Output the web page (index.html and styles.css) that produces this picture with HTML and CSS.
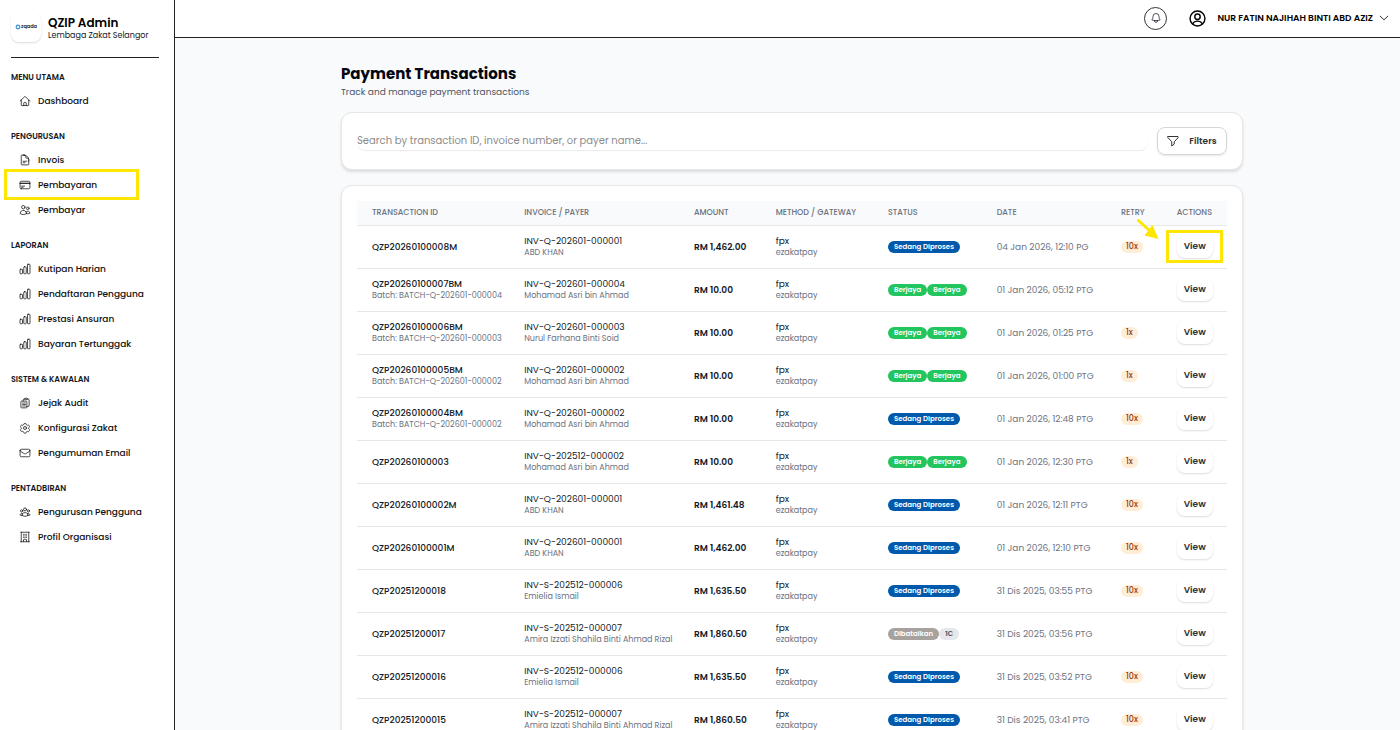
FILE: index.html
```html
<!DOCTYPE html>
<html lang="ms">
<head>
    <meta charset="UTF-8">
    <meta name="viewport" content="width=device-width, initial-scale=1.0">
    <title>QZIP Admin - Payment Transactions</title>
    <link rel="stylesheet" href="styles.css">
</head>
<body>
    <!-- Icon set -->
    <svg class="sprite" aria-hidden="true">
        <symbol id="i-home" viewBox="0 0 24 24"><path d="M2.5 12 11 3.500a1.400 1.400 0 0 1 2 0L21.500 12M4.500 10v10c0 .700.500 1.200 1.200 1.200h12.600c.700 0 1.200-.500 1.200-1.200V10M9.500 21v-5c0-.600.500-1.100 1.100-1.100h2.800c.600 0 1.100.500 1.100 1.100v5"/></symbol>
        <symbol id="i-doc" viewBox="0 0 24 24"><path d="M19.500 14.200v-2.600a3.400 3.400 0 0 0-3.400-3.400h-1.500a1.100 1.100 0 0 1-1.100-1.100V5.600a3.400 3.400 0 0 0-3.400-3.400H8.200M10.500 2.200H5.600c-.600 0-1.100.500-1.100 1.200v17.200c0 .700.500 1.200 1.100 1.200h12.800c.600 0 1.100-.500 1.100-1.200v-9.300a9 9 0 0 0-9-9zM8.200 14.500h7.500M8.200 17.500H12"/></symbol>
        <symbol id="i-card" viewBox="0 0 24 24"><path d="M2.200 8.200h19.600M2.200 9h19.600M5.200 14.200h6M5.200 16.500h3M4.500 19.500h15a2.300 2.300 0 0 0 2.300-2.200V6.800a2.300 2.300 0 0 0-2.300-2.300h-15a2.300 2.300 0 0 0-2.300 2.300v10.500a2.300 2.300 0 0 0 2.300 2.200z"/></symbol>
        <symbol id="i-users" viewBox="0 0 24 24"><path d="M15 19.100a9.400 9.400 0 0 0 2.600.400 9.300 9.300 0 0 0 4.100-1 4.100 4.100 0 0 0-7.500-2.400M15 19.100c0-1.100-.300-2.100-.800-3M15 19.100v.100A12.300 12.300 0 0 1 8.600 21a12.300 12.300 0 0 1-6.400-1.800v-.100a6.400 6.400 0 0 1 12-3M12 6.400a3.400 3.400 0 1 1-6.800 0 3.400 3.400 0 0 1 6.800 0zM20.200 8.600a2.600 2.600 0 1 1-5.200 0 2.600 2.600 0 0 1 5.200 0z"/></symbol>
        <symbol id="i-chart" viewBox="0 0 24 24"><rect x="2" y="12.500" width="5" height="9" rx="1.200"/><rect x="9.500" y="7.500" width="5" height="14" rx="1.200"/><rect x="17" y="2.500" width="5" height="19" rx="1.200"/></symbol>
        <symbol id="i-clipboard" viewBox="0 0 24 24"><path d="M9 12h3.800M9 15h3.800M9 18h3.800M15.800 18.800H18a2.300 2.300 0 0 0 2.300-2.300V6.100c0-1.100-.900-2.100-2-2.200l-1.100-.100M11.400 3.800a2.300 2.300 0 0 1 2.100-1.500H15c1 0 1.800.600 2.100 1.500M11.400 3.800c-.400.600.100 1.500.800 1.500h4c.500 0 .900-.700.900-1.500M11.400 3.800l-1.100.100a2.200 2.200 0 0 0-2 2.200v2.100M8.200 8.200H4.900c-.600 0-1.100.500-1.100 1.200v11.200c0 .600.500 1.100 1.100 1.100h9.700c.700 0 1.200-.500 1.200-1.100V9.400c0-.700-.500-1.200-1.200-1.200zM6.800 12h.1M6.800 15h.1M6.800 18h.1"/></symbol>
        <symbol id="i-cog" viewBox="0 0 24 24"><path d="M9.600 3.900c.100-.500.600-.900 1.100-.900h2.600c.500 0 1 .400 1.100.900l.200 1.300c.100.400.300.700.700.900l.800.500c.3.200.7.200 1 .1l1.200-.500a1.100 1.100 0 0 1 1.400.5l1.300 2.300c.3.500.2 1-.3 1.400l-1 .800c-.300.300-.400.600-.400 1v1c0 .400.100.700.400 1l1 .8c.4.300.5.900.3 1.400l-1.300 2.200a1.100 1.100 0 0 1-1.400.5l-1.200-.4c-.4-.100-.700-.100-1.100.1l-.700.400c-.4.200-.6.500-.7.900l-.2 1.300c-.1.500-.5.900-1.100.9h-2.600c-.5 0-1-.4-1.100-.9l-.2-1.300c-.1-.4-.3-.7-.7-.9l-.7-.5c-.4-.2-.7-.2-1.100-.1l-1.200.5a1.100 1.100 0 0 1-1.400-.5l-1.300-2.300c-.3-.4-.2-1 .3-1.400l1-.800c.3-.2.400-.6.400-1v-1c0-.4-.1-.7-.4-1l-1-.8c-.4-.3-.5-.9-.3-1.400l1.300-2.200a1.100 1.100 0 0 1 1.400-.5l1.200.4c.4.1.7.1 1.100-.1l.7-.4c.4-.2.6-.5.700-.9z"/><circle cx="12" cy="12" r="3"/></symbol>
        <symbol id="i-mail" viewBox="0 0 24 24"><path d="M21.800 6.800v10.500a2.300 2.300 0 0 1-2.300 2.200h-15a2.300 2.300 0 0 1-2.300-2.200V6.800M21.800 6.800a2.300 2.300 0 0 0-2.300-2.300h-15a2.300 2.300 0 0 0-2.300 2.300M21.800 7c0 .800-.400 1.500-1.100 1.900l-7.500 4.600a2.300 2.300 0 0 1-2.400 0L3.300 8.900A2.300 2.300 0 0 1 2.200 7"/></symbol>
        <symbol id="i-group" viewBox="0 0 24 24"><path d="M18 18.700a9 9 0 0 0 3.700-.5 3 3 0 0 0-4.700-2.700M18 18.700v.3a11.900 11.900 0 0 1-12 0v-.3M18 18.700c0-1.200-.3-2.300-.9-3.200M7 15.500a3 3 0 0 0-4.700 2.700 9 9 0 0 0 3.700.500M7 15.500a6 6 0 0 1 10.100 0M7 15.500a6 6 0 0 0-1 3.200M15 6.800a3 3 0 1 1-6 0 3 3 0 0 1 6 0zM21 9.800a2.200 2.200 0 1 1-4.500 0 2.200 2.200 0 0 1 4.500 0zM7.500 9.800a2.200 2.200 0 1 1-4.500 0 2.200 2.200 0 0 1 4.500 0z"/></symbol>
        <symbol id="i-building" viewBox="0 0 24 24"><path d="M3 21.500h18M3.800 2.500h16.500M4.500 2.500v19M19.500 2.500v19M9 6.800h1.500M9 9.800h1.500M9 12.800h1.500M13.500 6.800H15M13.500 9.800H15M13.500 12.800H15M9 21v-3.400c0-.6.500-1.100 1.100-1.100h3.800c.6 0 1.100.5 1.100 1.100V21"/></symbol>
        <symbol id="i-bell" viewBox="0 0 24 24"><path d="M14.900 17.100a23.800 23.800 0 0 0 5.400-1.300A9 9 0 0 1 18 9.800V9A6 6 0 0 0 6 9v.8a9 9 0 0 1-2.300 6 23.800 23.800 0 0 0 5.400 1.300M14.900 17.100a24.300 24.300 0 0 1-5.800 0M14.900 17.100a3 3 0 1 1-5.800 0"/></symbol>
        <symbol id="i-user" viewBox="0 0 24 24"><circle cx="12" cy="12" r="10.500"/><circle cx="12" cy="9.500" r="3.800"/><path d="M5 19.500c1.500-2.400 4-3.800 7-3.800s5.500 1.400 7 3.800"/></symbol>
        <symbol id="i-funnel" viewBox="0 0 24 24"><path d="M2 3h20v2.500L14.500 13.500v4.700L9.500 22v-8.500L2 5.500z"/></symbol>
        <symbol id="i-down" viewBox="0 0 24 24"><path d="m3 7.500 9 9 9-9"/></symbol>
    </svg>

    <div class="layout">
        <aside class="sidebar">
            <div class="brand">
                <div class="logo">
                    <svg viewBox="0 0 8 8" aria-hidden="true"><circle cx="4" cy="4" r="2.500" fill="#dff0fb" stroke="#3b8fd0" stroke-width="1.500"/></svg>
                    <span>zqada</span>
                </div>
                <div class="brand-text">
                    <div class="brand-name">QZIP Admin</div>
                    <div class="brand-org">Lembaga Zakat Selangor</div>
                </div>
            </div>
            <nav class="menu">
                <h2>MENU UTAMA</h2>
                <a href="#"><svg><use href="#i-home"/></svg>Dashboard</a>
                <h2>PENGURUSAN</h2>
                <a href="#"><svg><use href="#i-doc"/></svg>Invois</a>
                <a href="#" class="marked"><svg><use href="#i-card"/></svg>Pembayaran</a>
                <a href="#"><svg><use href="#i-users"/></svg>Pembayar</a>
                <h2>LAPORAN</h2>
                <a href="#"><svg><use href="#i-chart"/></svg>Kutipan Harian</a>
                <a href="#"><svg><use href="#i-chart"/></svg>Pendaftaran Pengguna</a>
                <a href="#"><svg><use href="#i-chart"/></svg>Prestasi Ansuran</a>
                <a href="#"><svg><use href="#i-chart"/></svg>Bayaran Tertunggak</a>
                <h2>SISTEM &amp; KAWALAN</h2>
                <a href="#"><svg><use href="#i-clipboard"/></svg>Jejak Audit</a>
                <a href="#"><svg><use href="#i-cog"/></svg>Konfigurasi Zakat</a>
                <a href="#"><svg><use href="#i-mail"/></svg>Pengumuman Email</a>
                <h2>PENTADBIRAN</h2>
                <a href="#"><svg><use href="#i-group"/></svg>Pengurusan Pengguna</a>
                <a href="#"><svg><use href="#i-building"/></svg>Profil Organisasi</a>
            </nav>
        </aside>

        <div class="page">
            <header class="topbar">
                <button class="bell" aria-label="Notifikasi"><svg><use href="#i-bell"/></svg></button>
                <button class="account">
                    <svg class="avatar"><use href="#i-user"/></svg>
                    NUR FATIN NAJIHAH BINTI ABD AZIZ
                    <svg class="caret"><use href="#i-down"/></svg>
                </button>
            </header>

            <main class="content">
                <div class="container">
                    <h1>Payment Transactions</h1>
                    <p class="subtitle">Track and manage payment transactions</p>

                    <form class="card search">
                        <input type="text" aria-label="Search" placeholder="Search by transaction ID, invoice number, or payer name...">
                        <button type="button" class="filters"><svg><use href="#i-funnel"/></svg>Filters</button>
                    </form>

                    <div class="card">
                        <table>
                            <colgroup>
                                <col class="c-id"><col class="c-invoice"><col class="c-amount"><col class="c-method">
                                <col class="c-status"><col class="c-date"><col class="c-retry"><col class="c-actions">
                            </colgroup>
                            <thead>
                                <tr>
                                    <th>TRANSACTION ID</th>
                                    <th>INVOICE / PAYER</th>
                                    <th>AMOUNT</th>
                                    <th>METHOD / GATEWAY</th>
                                    <th>STATUS</th>
                                    <th>DATE</th>
                                    <th>RETRY</th>
                                    <th>ACTIONS</th>
                                </tr>
                            </thead>
                            <tbody>
                                <tr>
                                    <td class="id">QZP20260100008M</td>
                                    <td>INV-Q-202601-000001<small>ABD KHAN</small></td>
                                    <td class="amount">RM 1,462.00</td>
                                    <td>fpx<small>ezakatpay</small></td>
                                    <td><span class="badge blue">Sedang Diproses</span></td>
                                    <td class="date">04 Jan 2026, 12:10 PG</td>
                                    <td><span class="badge orange">10x</span></td>
                                    <td>
                                        <div class="marked">
                                            <svg class="arrow" viewBox="0 0 22 21"><path d="M1.500 1.500 13 12" fill="none" stroke="#ffe600" stroke-width="3"/><path d="M21.500 20 7.500 16.500 15.500 6z" fill="#ffe600" stroke="none"/></svg>
                                            <button class="view">View</button>
                                        </div>
                                    </td>
                                </tr>
                                <tr>
                                    <td class="id">QZP20260100007BM<small>Batch: BATCH-Q-202601-000004</small></td>
                                    <td>INV-Q-202601-000004<small>Mohamad Asri bin Ahmad</small></td>
                                    <td class="amount">RM 10.00</td>
                                    <td>fpx<small>ezakatpay</small></td>
                                    <td><span class="badge green">Berjaya</span><span class="badge green">Berjaya</span></td>
                                    <td class="date">01 Jan 2026, 05:12 PTG</td>
                                    <td></td>
                                    <td><button class="view">View</button></td>
                                </tr>
                                <tr>
                                    <td class="id">QZP20260100006BM<small>Batch: BATCH-Q-202601-000003</small></td>
                                    <td>INV-Q-202601-000003<small>Nurul Farhana Binti Soid</small></td>
                                    <td class="amount">RM 10.00</td>
                                    <td>fpx<small>ezakatpay</small></td>
                                    <td><span class="badge green">Berjaya</span><span class="badge green">Berjaya</span></td>
                                    <td class="date">01 Jan 2026, 01:25 PTG</td>
                                    <td><span class="badge orange">1x</span></td>
                                    <td><button class="view">View</button></td>
                                </tr>
                                <tr>
                                    <td class="id">QZP20260100005BM<small>Batch: BATCH-Q-202601-000002</small></td>
                                    <td>INV-Q-202601-000002<small>Mohamad Asri bin Ahmad</small></td>
                                    <td class="amount">RM 10.00</td>
                                    <td>fpx<small>ezakatpay</small></td>
                                    <td><span class="badge green">Berjaya</span><span class="badge green">Berjaya</span></td>
                                    <td class="date">01 Jan 2026, 01:00 PTG</td>
                                    <td><span class="badge orange">1x</span></td>
                                    <td><button class="view">View</button></td>
                                </tr>
                                <tr>
                                    <td class="id">QZP20260100004BM<small>Batch: BATCH-Q-202601-000002</small></td>
                                    <td>INV-Q-202601-000002<small>Mohamad Asri bin Ahmad</small></td>
                                    <td class="amount">RM 10.00</td>
                                    <td>fpx<small>ezakatpay</small></td>
                                    <td><span class="badge blue">Sedang Diproses</span></td>
                                    <td class="date">01 Jan 2026, 12:48 PTG</td>
                                    <td><span class="badge orange">10x</span></td>
                                    <td><button class="view">View</button></td>
                                </tr>
                                <tr>
                                    <td class="id">QZP20260100003</td>
                                    <td>INV-Q-202512-000002<small>Mohamad Asri bin Ahmad</small></td>
                                    <td class="amount">RM 10.00</td>
                                    <td>fpx<small>ezakatpay</small></td>
                                    <td><span class="badge green">Berjaya</span><span class="badge green">Berjaya</span></td>
                                    <td class="date">01 Jan 2026, 12:30 PTG</td>
                                    <td><span class="badge orange">1x</span></td>
                                    <td><button class="view">View</button></td>
                                </tr>
                                <tr>
                                    <td class="id">QZP20260100002M</td>
                                    <td>INV-Q-202601-000001<small>ABD KHAN</small></td>
                                    <td class="amount">RM 1,461.48</td>
                                    <td>fpx<small>ezakatpay</small></td>
                                    <td><span class="badge blue">Sedang Diproses</span></td>
                                    <td class="date">01 Jan 2026, 12:11 PTG</td>
                                    <td><span class="badge orange">10x</span></td>
                                    <td><button class="view">View</button></td>
                                </tr>
                                <tr>
                                    <td class="id">QZP20260100001M</td>
                                    <td>INV-Q-202601-000001<small>ABD KHAN</small></td>
                                    <td class="amount">RM 1,462.00</td>
                                    <td>fpx<small>ezakatpay</small></td>
                                    <td><span class="badge blue">Sedang Diproses</span></td>
                                    <td class="date">01 Jan 2026, 12:10 PTG</td>
                                    <td><span class="badge orange">10x</span></td>
                                    <td><button class="view">View</button></td>
                                </tr>
                                <tr>
                                    <td class="id">QZP20251200018</td>
                                    <td>INV-S-202512-000006<small>Emielia Ismail</small></td>
                                    <td class="amount">RM 1,635.50</td>
                                    <td>fpx<small>ezakatpay</small></td>
                                    <td><span class="badge blue">Sedang Diproses</span></td>
                                    <td class="date">31 Dis 2025, 03:55 PTG</td>
                                    <td><span class="badge orange">10x</span></td>
                                    <td><button class="view">View</button></td>
                                </tr>
                                <tr>
                                    <td class="id">QZP20251200017</td>
                                    <td>INV-S-202512-000007<small>Amira Izzati Shahila Binti Ahmad Rizal</small></td>
                                    <td class="amount">RM 1,860.50</td>
                                    <td>fpx<small>ezakatpay</small></td>
                                    <td><span class="badge taupe">Dibatalkan</span><span class="badge grey">1C</span></td>
                                    <td class="date">31 Dis 2025, 03:56 PTG</td>
                                    <td></td>
                                    <td><button class="view">View</button></td>
                                </tr>
                                <tr>
                                    <td class="id">QZP20251200016</td>
                                    <td>INV-S-202512-000006<small>Emielia Ismail</small></td>
                                    <td class="amount">RM 1,635.50</td>
                                    <td>fpx<small>ezakatpay</small></td>
                                    <td><span class="badge blue">Sedang Diproses</span></td>
                                    <td class="date">31 Dis 2025, 03:52 PTG</td>
                                    <td><span class="badge orange">10x</span></td>
                                    <td><button class="view">View</button></td>
                                </tr>
                                <tr>
                                    <td class="id">QZP20251200015</td>
                                    <td>INV-S-202512-000007<small>Amira Izzati Shahila Binti Ahmad Rizal</small></td>
                                    <td class="amount">RM 1,860.50</td>
                                    <td>fpx<small>ezakatpay</small></td>
                                    <td><span class="badge blue">Sedang Diproses</span></td>
                                    <td class="date">31 Dis 2025, 03:41 PTG</td>
                                    <td><span class="badge orange">10x</span></td>
                                    <td><button class="view">View</button></td>
                                </tr>
                            </tbody>
                        </table>
                    </div>
                </div>
            </main>
        </div>
    </div>
</body>
</html>
```

FILE: styles.css
```css
* {
    box-sizing: border-box;
}

body, h1, h2, p {
    margin: 0;
}

body {
    font-family: 'Poppins', 'Inter', 'Open Sans', sans-serif;
    font-size: 9px;
    line-height: 12px;
    color: #111827;
    background-color: #ffffff;
}

button, input {
    font-family: inherit;
    color: inherit;
}

button {
    padding: 0;
    border: none;
    background: none;
    cursor: pointer;
}

svg {
    fill: none;
    stroke: currentColor;
    stroke-width: 1.5;
    stroke-linecap: round;
    stroke-linejoin: round;
    flex-shrink: 0;
}

.sprite {
    display: none;
}

.layout {
    display: flex;
    height: 100vh;
}

/* Sidebar */
.sidebar {
    width: 175px;
    flex-shrink: 0;
    padding: 12px 15px 0 11px;
    border-right: 1px solid #222222;
}

.brand {
    display: flex;
    align-items: center;
    gap: 7px;
    padding-bottom: 15px;
    border-bottom: 1px solid #222222;
}

.brand-text {
    padding-top: 3px;
}

.logo {
    display: flex;
    align-items: center;
    justify-content: center;
    width: 30px;
    height: 30px;
    border-radius: 8px;
    box-shadow: 0 1px 2px rgba(0, 0, 0, 0.15);
    font-size: 5px;
    font-weight: 600;
}

.logo svg {
    width: 6px;
    height: 6px;
}

.brand-name {
    font-size: 12px;
    line-height: 15px;
    font-weight: 600;
    color: #000000;
}

.brand-org {
    font-size: 8px;
    line-height: 12px;
}

.menu h2 {
    margin: 12px 0 2px;
    font-size: 8px;
    line-height: 16px;
    font-weight: 600;
}

.menu h2:not(:first-child) {
    margin-top: 16px;
}

.menu a {
    position: relative;
    display: flex;
    align-items: center;
    gap: 7px;
    height: 25px;
    padding-left: 8px;
    font-size: 9px;
    font-weight: 500;
    color: #111111;
    text-decoration: none;
}

.menu svg {
    width: 12px;
    height: 12px;
}

/* Yellow call-out boxes */
.marked::after {
    content: "";
    position: absolute;
    border: 3px solid #ffe600;
    pointer-events: none;
}

.menu .marked::after {
    inset: -3px 20px -3px -7px;
}

td .marked {
    position: relative;
    width: 36px;
}

td .marked::after {
    inset: -5px -10px -5px -11px;
}

.arrow {
    position: absolute;
    left: -40px;
    top: -16px;
    width: 22px;
    height: 21px;
}

/* Top bar */
.page {
    flex: 1;
    min-width: 0;
    display: flex;
    flex-direction: column;
}

.topbar {
    display: flex;
    align-items: center;
    justify-content: flex-end;
    gap: 22px;
    height: 38px;
    padding: 0 11px 1px 0;
    flex-shrink: 0;
    border-bottom: 1px solid #222222;
}

.bell {
    display: flex;
    align-items: center;
    justify-content: center;
    width: 23px;
    height: 23px;
    border: 1px solid #333333;
    border-radius: 50%;
}

.bell svg {
    width: 12px;
    height: 12px;
}

.account {
    display: flex;
    align-items: center;
    font-size: 9px;
    font-weight: 600;
    color: #000000;
}

.avatar {
    width: 17px;
    height: 17px;
    margin-right: 11px;
    stroke-width: 2;
}

.caret {
    width: 10px;
    height: 10px;
    margin-left: 6px;
    stroke-width: 2;
}

/* Content */
.content {
    flex: 1;
    padding: 24px 15px 24px 24px;
    overflow-y: auto;
    scrollbar-width: none;
    background-color: #f9fafb;
}

.container {
    max-width: 902px;
    margin: 0 auto;
}

h1 {
    font-size: 15px;
    line-height: 23px;
    font-weight: 700;
    color: #030712;
}

.subtitle {
    margin-bottom: 13px;
    line-height: 14px;
    color: #4b5563;
}

.card {
    margin-bottom: 15px;
    padding: 15px;
    border: 1px solid #e7e7e7;
    border-radius: 11px;
    background-color: #ffffff;
    box-shadow: 0 2px 3px rgba(0, 0, 0, 0.12);
}

.search {
    display: flex;
    align-items: center;
    gap: 9px;
    height: 58px;
}

.search input {
    flex: 1;
    height: 17px;
    padding: 0;
    border: none;
    border-radius: 8px;
    font-size: 10px;
    background-color: transparent;
    box-shadow: 0 1px 1px rgba(0, 0, 0, 0.08);
}

.search input::placeholder {
    color: #8b8b8b;
}

.filters {
    display: flex;
    align-items: center;
    justify-content: center;
    gap: 10px;
    width: 70px;
    height: 28px;
    border: 1px solid #d6d6d6;
    border-radius: 8px;
    font-size: 9px;
    font-weight: 600;
    color: #333333;
    box-shadow: 0 1px 2px rgba(0, 0, 0, 0.1);
}

.filters svg {
    width: 12px;
    height: 12px;
    stroke-width: 2;
}

/* Transactions table */
table {
    width: 100%;
    table-layout: fixed;
    border-collapse: collapse;
}

.c-id { width: 17.5%; }
.c-invoice { width: 19.5%; }
.c-amount { width: 9.4%; }
.c-method { width: 12.9%; }
.c-status { width: 12.5%; }
.c-date { width: 14.3%; }
.c-retry { width: 6.4%; }
.c-actions { width: 7.5%; }

th, td {
    padding: 0 0 0 15px;
    text-align: left;
    white-space: nowrap;
    border-bottom: 1px solid #e5e7eb;
}

th {
    height: 24px;
    font-size: 8px;
    font-weight: 500;
    color: #6b7280;
    background-color: #f9fafb;
}

td {
    height: 43px;
}

td small {
    display: block;
    font-size: 8px;
    line-height: 11px;
    font-weight: 400;
    color: #6b7280;
}

.id {
    font-weight: 500;
}

.amount {
    font-weight: 600;
}

.date {
    color: #6b7280;
}

.badge {
    display: inline-block;
    padding: 0 6px;
    border-radius: 6px;
    font-size: 7px;
    line-height: 12px;
    font-weight: 600;
    color: #ffffff;
    vertical-align: middle;
}

.blue { background-color: #0059ab; }
.green { background-color: #22c55e; }
.taupe { background-color: #a8a29e; }

.grey {
    background-color: #e5e7eb;
    color: #4b5563;
}

.orange {
    padding: 0 5px;
    background-color: #ffedd5;
    font-size: 8px;
    font-weight: 500;
    color: #9a3412;
}

.view {
    display: block;
    width: 36px;
    height: 23px;
    border-radius: 8px;
    font-size: 9px;
    font-weight: 600;
    color: #333333;
    box-shadow: 0 1px 2px rgba(0, 0, 0, 0.14);
}
```
